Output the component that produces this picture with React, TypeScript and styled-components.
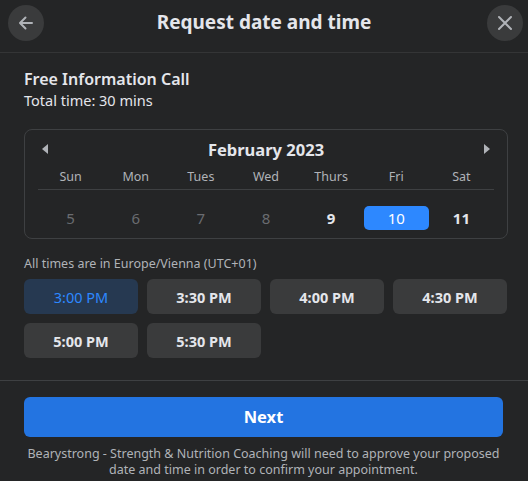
import React from "react";
import styled, { createGlobalStyle } from "styled-components";

const Global = createGlobalStyle`
  html, body { margin: 0; padding: 0; background: #242526; }
  body { font-family: "Noto Sans", "Open Sans", "Liberation Sans", sans-serif; color: #e4e6eb; }
  * { box-sizing: border-box; }
`;

const Dialog = styled.div`
  width: 528px;
  height: 481px;
  background: #242526;
  display: flex;
  flex-direction: column;
  overflow: hidden;
`;

const Header = styled.div`
  height: 53px;
  flex: none;
  display: flex;
  align-items: flex-start;
  justify-content: space-between;
  padding: 5px 5px 0 8px;
  border-bottom: 1px solid #343536;
  position: relative;
`;

const Title = styled.h1`
  position: absolute;
  left: 0;
  right: 0;
  top: 8px;
  margin: 0;
  text-align: center;
  font-size: 19px;
  font-weight: 700;
  line-height: 28px;
  color: #e4e6eb;
  pointer-events: none;
`;

const CircleButton = styled.button`
  width: 36px;
  height: 36px;
  border-radius: 50%;
  border: none;
  background: #3a3b3c;
  display: flex;
  align-items: center;
  justify-content: center;
  padding: 0;
  color: #b0b3b8;
`;

const Body = styled.div`
  padding: 15px 24px 0 24px;
  display: flex;
  flex-direction: column;
  flex: 1;
`;

const ServiceName = styled.div`
  font-size: 16px;
  font-weight: 600;
  line-height: 22px;
  color: #e4e6eb;
`;

const ServiceTime = styled.div`
  font-size: 14.5px;
  line-height: 20px;
  color: #e4e6eb;
`;

const Calendar = styled.div`
  margin-top: 19px;
  width: 484px;
  height: 110px;
  border: 1px solid #3e4042;
  border-radius: 8px;
  padding: 5px 13px 0 13px;
`;

const MonthRow = styled.div`
  display: flex;
  align-items: center;
  justify-content: space-between;
  height: 30px;
  padding: 0 4px 2px 4px;
`;

const MonthTitle = styled.div`
  font-size: 16.5px;
  font-weight: 700;
  color: #e4e6eb;
`;

const Arrow = styled.span<{ $dir: "left" | "right" }>`
  width: 0;
  height: 0;
  border-top: 5px solid transparent;
  border-bottom: 5px solid transparent;
  ${(p) =>
    p.$dir === "left"
      ? "border-right: 6px solid #b0b3b8;"
      : "border-left: 6px solid #b0b3b8;"}
`;

const Grid = styled.div`
  display: grid;
  grid-template-columns: repeat(7, 1fr);
`;

const WeekHead = styled(Grid)`
  height: 25px;
  align-items: center;
  border-bottom: 1px solid #3e4042;
`;

const WeekDay = styled.div`
  text-align: center;
  font-size: 12.5px;
  color: #b0b3b8;
  line-height: 18px;
`;

const DaysRow = styled(Grid)`
  margin-top: 16px;
`;

const Day = styled.div<{ $state: "past" | "open" | "selected" }>`
  height: 24px;
  border-radius: 5px;
  display: flex;
  align-items: center;
  justify-content: center;
  font-size: 15px;
  font-weight: ${(p) => (p.$state === "open" ? 700 : 400)};
  color: ${(p) =>
    p.$state === "past" ? "#6a6c70" : p.$state === "selected" ? "#ffffff" : "#e4e6eb"};
  background: ${(p) => (p.$state === "selected" ? "#2d88ff" : "transparent")};
`;

const Zone = styled.div`
  margin-top: 16px;
  font-size: 12.5px;
  line-height: 18px;
  color: #b0b3b8;
`;

const Slots = styled.div`
  margin-top: 6px;
  display: grid;
  grid-template-columns: repeat(4, 114px);
  column-gap: 9px;
  row-gap: 9px;
`;

const Slot = styled.button<{ $selected?: boolean }>`
  height: 35px;
  border: none;
  border-radius: 6px;
  font-family: inherit;
  font-size: 14.5px;
  font-weight: ${(p) => (p.$selected ? 400 : 700)};
  background: ${(p) => (p.$selected ? "#263951" : "#3a3b3c")};
  color: ${(p) => (p.$selected ? "#2d88ff" : "#e4e6eb")};
  padding: 0;
`;

const Footer = styled.div`
  flex: none;
  border-top: 1px solid #3e4042;
  padding: 16px 24px 0 24px;
  display: flex;
  flex-direction: column;
  align-items: stretch;
  height: 101px;
`;

const NextButton = styled.button`
  width: 479px;
  height: 40px;
  border: none;
  border-radius: 6px;
  background: #2374e1;
  color: #ffffff;
  font-family: inherit;
  font-size: 16.5px;
  font-weight: 700;
  padding: 0 0 2px 0;
`;

const Notice = styled.p`
  margin: 9px 0 0 0;
  width: 479px;
  text-align: center;
  font-size: 12.5px;
  line-height: 16px;
  color: #b0b3b8;
`;

const days: { n: number; state: "past" | "open" | "selected" }[] = [
  { n: 5, state: "past" },
  { n: 6, state: "past" },
  { n: 7, state: "past" },
  { n: 8, state: "past" },
  { n: 9, state: "open" },
  { n: 10, state: "selected" },
  { n: 11, state: "open" },
];

const weekdays = ["Sun", "Mon", "Tues", "Wed", "Thurs", "Fri", "Sat"];
const times = ["3:00 PM", "3:30 PM", "4:00 PM", "4:30 PM", "5:00 PM", "5:30 PM"];

export default function App() {
  return (
    <>
      <Global />
      <Dialog>
        <Header>
          <CircleButton aria-label="Back">
            <svg width="20" height="20" viewBox="0 0 20 20" fill="none">
              <path d="M16 10H4.5M9.5 4.5L4 10l5.5 5.5" stroke="#b0b3b8" strokeWidth="2" strokeLinecap="round" strokeLinejoin="round" />
            </svg>
          </CircleButton>
          <Title>Request date and time</Title>
          <CircleButton aria-label="Close">
            <svg width="20" height="20" viewBox="0 0 20 20" fill="none">
              <path d="M4 4l12 12M16 4L4 16" stroke="#b0b3b8" strokeWidth="2" strokeLinecap="round" />
            </svg>
          </CircleButton>
        </Header>
        <Body>
          <ServiceName>Free Information Call</ServiceName>
          <ServiceTime>Total time: 30 mins</ServiceTime>
          <Calendar>
            <MonthRow>
              <Arrow $dir="left" />
              <MonthTitle>February 2023</MonthTitle>
              <Arrow $dir="right" />
            </MonthRow>
            <WeekHead>
              {weekdays.map((d) => (
                <WeekDay key={d}>{d}</WeekDay>
              ))}
            </WeekHead>
            <DaysRow>
              {days.map((d) => (
                <Day key={d.n} $state={d.state}>
                  {d.n}
                </Day>
              ))}
            </DaysRow>
          </Calendar>
          <Zone>All times are in Europe/Vienna (UTC+01)</Zone>
          <Slots>
            {times.map((t, i) => (
              <Slot key={t} $selected={i === 0}>
                {t}
              </Slot>
            ))}
          </Slots>
        </Body>
        <Footer>
          <NextButton>Next</NextButton>
          <Notice>
            Bearystrong - Strength &amp; Nutrition Coaching will need to approve your proposed date and time in order to confirm your appointment.
          </Notice>
        </Footer>
      </Dialog>
    </>
  );
}
